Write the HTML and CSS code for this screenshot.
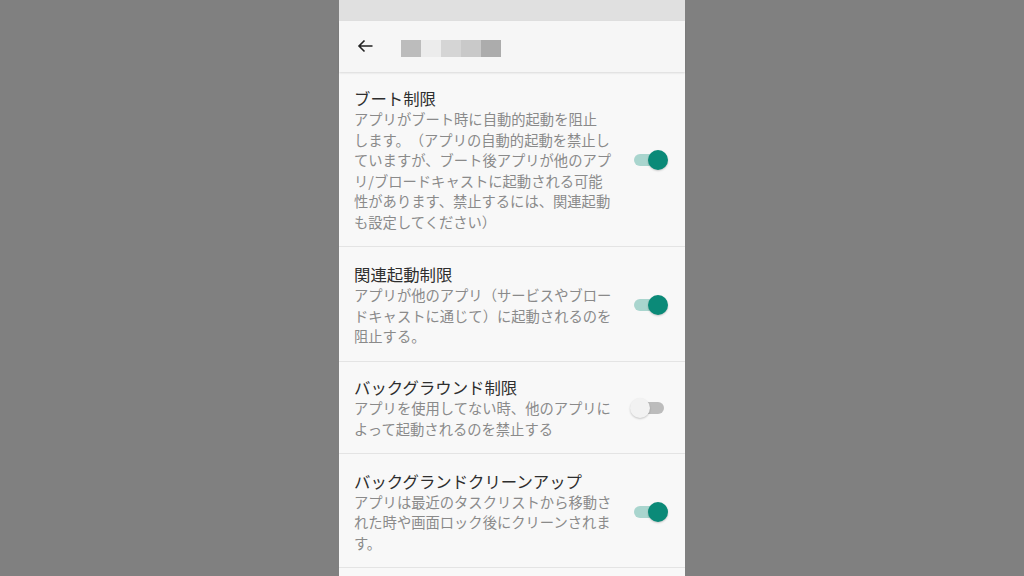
FILE: index.html
```html
<!DOCTYPE html>
<html lang="ja">
<head>
<meta charset="utf-8">
<link rel="stylesheet" href="styles.css">
</head>
<body>
<div class="phone">
  <div class="statusbar"></div>
  <div class="appbar">
    <svg class="back" width="16" height="16" viewBox="0 0 16 16"><path d="M15.5 8H2M7.5 2.5L2 8l5.5 5.5" fill="none" stroke="#222" stroke-width="1.6"/></svg>
    <div class="title-blur">
      <span class="b1"></span><span class="b2"></span><span class="b3"></span><span class="b4"></span><span class="b5"></span>
    </div>
  </div>
  <div class="list">
    <div class="item first">
      <div class="text">
        <div class="ttl">ブート制限</div>
        <div class="desc">アプリがブート時に自動的起動を阻止<br>します。（アプリの自動的起動を禁止し<br>ていますが、ブート後アプリが他のアプ<br>リ/ブロードキャストに起動される可能<br>性があります、禁止するには、関連起動<br>も設定してください）</div>
      </div>
      <div class="switch on"><span class="track"></span><span class="thumb"></span></div>
    </div>
    <div class="item">
      <div class="text">
        <div class="ttl">関連起動制限</div>
        <div class="desc">アプリが他のアプリ（サービスやブロー<br>ドキャストに通じて）に起動されるのを<br>阻止する。</div>
      </div>
      <div class="switch on"><span class="track"></span><span class="thumb"></span></div>
    </div>
    <div class="item compact">
      <div class="text">
        <div class="ttl">バックグラウンド制限</div>
        <div class="desc">アプリを使用してない時、他のアプリに<br>よって起動されるのを禁止する</div>
      </div>
      <div class="switch off"><span class="track"></span><span class="thumb"></span></div>
    </div>
    <div class="item">
      <div class="text">
        <div class="ttl">バックグランドクリーンアップ</div>
        <div class="desc">アプリは最近のタスクリストから移動さ<br>れた時や画面ロック後にクリーンされま<br>す。</div>
      </div>
      <div class="switch on"><span class="track"></span><span class="thumb"></span></div>
    </div>
  </div>
</div>
</body>
</html>
```

FILE: styles.css
```css
html, body {
  margin: 0;
  padding: 0;
  height: 100%;
}
body {
  background: #808080;
  display: flex;
  justify-content: center;
  overflow: hidden;
  font-family: "Noto Sans CJK JP", "Noto Sans", sans-serif;
}
.phone {
  width: 346px;
  height: 576px;
  background: #f8f8f8;
  display: flex;
  flex-direction: column;
}
.statusbar {
  height: 21px;
  background: #e0e0e0;
  flex: none;
}
.appbar {
  height: 51px;
  flex: none;
  background: #f6f6f6;
  box-shadow: 0 1px 2px rgba(0,0,0,0.12);
  display: flex;
  align-items: center;
  padding-left: 18px;
  position: relative;
  z-index: 1;
}
.back {
  display: block;
  margin-top: -2px;
}
.title-blur {
  display: flex;
  margin-left: 28px;
  margin-top: 4px;
}
.title-blur span {
  width: 20px;
  height: 17px;
  display: block;
}
.b1 { background: #bcbcbc; }
.b2 { background: #ececec; }
.b3 { background: #d5d5d5; }
.b4 { background: #c9c9c9; }
.b5 { background: #acacac; }
.list {
  display: flex;
  flex-direction: column;
}
.item {
  display: flex;
  align-items: center;
  justify-content: space-between;
  padding: 17px 17px 14px 15px;
  border-bottom: 1px solid #e4e4e4;
}
.item.first {
  padding-top: 16px;
}
.item.compact {
  padding-top: 15.5px;
  padding-bottom: 13.5px;
}
.text {
  width: 270px;
  text-spacing-trim: space-all;
}
.ttl {
  font-size: 16.4px;
  line-height: 21px;
  color: #2e2e2e;
  white-space: nowrap;
}
.desc {
  font-size: 14.3px;
  line-height: 20.5px;
  color: #8a8a8a;
  white-space: nowrap;
}
.switch {
  width: 38px;
  height: 20px;
  position: relative;
  flex: none;
}
.track {
  position: absolute;
  left: 4px;
  top: 4px;
  width: 30px;
  height: 12px;
  border-radius: 6px;
}
.thumb {
  position: absolute;
  top: 0;
  width: 20px;
  height: 20px;
  border-radius: 50%;
  box-shadow: 0 1px 2px rgba(0,0,0,0.2);
}
.on .track { background: #a9d5ce; }
.on .thumb { left: 18px; background: #0b8a78; }
.off .track { background: #bcbcbc; }
.off .thumb { left: 0; background: #f2f2f2; }
```
